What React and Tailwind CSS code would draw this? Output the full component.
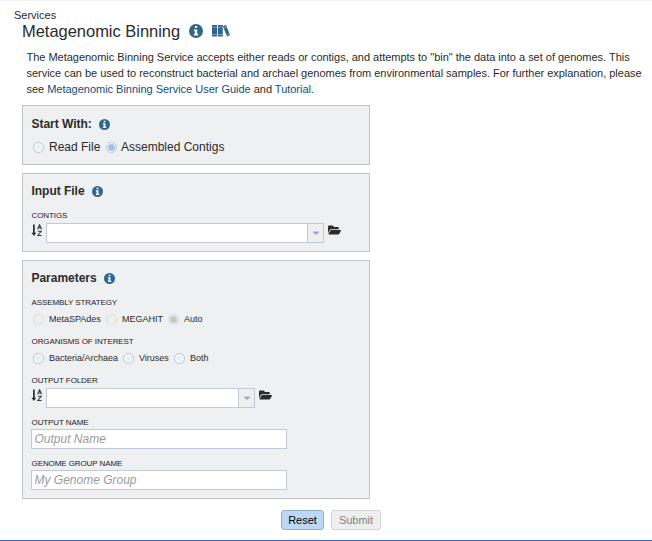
import React from "react";
import { FaFolderOpen } from "react-icons/fa";

function Info({ className }) {
  return (
    <svg className={"shrink-0 " + className} viewBox="0 0 14 14">
      <circle cx="7" cy="7" r="7" fill="#2f6690" />
      <path d="M5.9 2.1h2.3v2H5.9zM4.9 5.4h3.3v4.4h1v1.7H4.9V9.8h1V7.1h-1z" fill="#fff" />
    </svg>
  );
}

function Books() {
  return (
    <svg className="ml-[9px] h-[12px] w-[18px] shrink-0" viewBox="0 0 18 12">
      <path d="M0 0h5v11.4H0zM5.8 0h5v11.4h-5zM10.9 1.3 14 .1l4 10-3 1.3z" fill="#2f6690" />
      <path d="M0 2.2h5M5.8 2.2h5M0 9.5h5M5.8 9.5h5M11.5 3.2l3.2-1.3M14.3 9.9l3.2-1.3" stroke="#fff" strokeWidth=".5" opacity=".75" />
    </svg>
  );
}

function SortIcon() {
  return (
    <svg className="mr-[3px] mt-px h-[13px] w-[12px] shrink-0" viewBox="0 0 12 13">
      <path d="M2.9 .6v9" stroke="#2b2b2b" strokeWidth="1.7" />
      <path d="M.5 8.7h4.8L2.9 12z" fill="#2b2b2b" />
      <path d="M6.6 5.3 8.6.7l2 4.6M7.3 3.9h2.6M6.8 7.3h3.4L6.8 11.5h3.8" fill="none" stroke="#3a3a3a" strokeWidth="1.05" />
    </svg>
  );
}

function Radio({ disabled, checked }) {
  return (
    <span
      className={
        "flex size-[11px] shrink-0 items-center justify-center rounded-full border " +
        (disabled ? "border-[#d9dadb] bg-[#f0f0f1]" : "border-[#b9c2cf] bg-[radial-gradient(circle,#d8eaf8_0%,#edf5fc_45%,#fff_75%)]")
      }
    >
      {checked && <span className={"size-[7px] rounded-full " + (disabled ? "bg-[#c6c7c9]" : "bg-[#9cc5e8]")} />}
    </span>
  );
}

function Panel({ className, children }) {
  return <section className={"ml-[22px] w-[348px] border border-[#c1c4c6] bg-[#eff0f2] pl-[8px] " + className}>{children}</section>;
}

function Heading({ children }) {
  return (
    <h2 className="flex h-[16px] items-center text-[12px] font-bold leading-[16px] tracking-[-0.03px] text-[#2b2b2b]">
      <span className="mr-[7px] pl-[0.5px]">{children}</span>
      <Info className="size-[11px]" />
    </h2>
  );
}

function Label({ className, children }) {
  return <div className={"h-[10px] whitespace-nowrap pl-[0.5px] text-[8px] leading-[10px] tracking-[-0.09px] text-[#222] " + className}>{children}</div>;
}

function Picker({ width }) {
  return (
    <div className="flex items-start">
      <SortIcon />
      <div className={"flex h-[20px] border border-[#c3cad7] bg-white " + width}>
        <div className="flex-1" />
        <div className="flex w-[16px] items-center justify-center border-l border-[#c3cad7] bg-[#efefef]">
          <svg className="size-[6px]" viewBox="0 0 6 6">
            <path d="M0 1.6h6v.8L3 5 0 2.4z" fill="#98add4" />
          </svg>
        </div>
      </div>
      <FaFolderOpen preserveAspectRatio="none" className="ml-[4px] mt-[1px] h-[12px] w-[13px] text-[#2b2b2b]" />
    </div>
  );
}

const field = "block h-[20px] w-[256px] border border-[#c3cad7] bg-white pb-px pl-[2.5px] text-[12px] italic text-[#333] outline-none placeholder:text-[#9b9b9b]";

export default function App() {
  return (
    <main className="flex h-[541px] w-[652px] flex-col overflow-hidden border-b border-t border-b-[#3569c1] border-t-[#f3f3f3] bg-white font-['Liberation_Sans',Arial,sans-serif] text-[#2b2b2b]">
      <div className="ml-[14px] mt-[8px] h-[13px] text-[11px] leading-[13px]">Services</div>
      <h1 className="ml-[22px] flex h-[18px] items-center text-[16.5px] leading-[18px]">
        <span className="mr-[9px] w-[158px] whitespace-nowrap tracking-[-0.03px]">Metagenomic Binning</span>
        <Info className="size-[14px]" />
        <Books />
      </h1>
      <p className="ml-[26.5px] mt-[9px] h-[48px] whitespace-nowrap text-[11px] leading-[16px] tracking-[-0.02px]">
        The Metagenomic Binning Service accepts either reads or contigs, and attempts to "bin" the data into a set of genomes. This
        <br />
        service can be used to reconstruct bacterial and archael genomes from environmental samples. For further explanation, please
        <br />
        see <a className="text-[#144d7b]">Metagenomic Binning Service User Guide</a> and <a className="text-[#144d7b]">Tutorial</a>.
      </p>

      <Panel className="mt-[8px] h-[60px] pt-[10px]">
        <Heading>Start With:</Heading>
        <div className="mt-[7px] flex h-[16px] items-center pl-[2px] text-[12px]">
          <Radio />
          <span className="ml-[5px] mr-[5px] w-[52px] whitespace-nowrap">Read File</span>
          <Radio checked />
          <span className="ml-[4px] whitespace-nowrap">Assembled Contigs</span>
        </div>
      </Panel>

      <Panel className="mt-[8px] h-[79px] pt-[9px]">
        <Heading>Input File</Heading>
        <Label className="mb-[2px] mt-[12px]">CONTIGS</Label>
        <Picker width="w-[278px]" />
      </Panel>

      <Panel className="mt-[8px] h-[239px] pt-[9px]">
        <Heading>Parameters</Heading>
        <Label className="mt-[12px]">ASSEMBLY STRATEGY</Label>
        <div className="mt-[5px] flex h-[13px] items-center pl-[2px] text-[9px] leading-[13px]">
          <Radio disabled />
          <span className="ml-[5px] mr-[4px] w-[53px]">MetaSPAdes</span>
          <Radio disabled />
          <span className="ml-[5px] mr-[5px] w-[41px]">MEGAHIT</span>
          <Radio disabled checked />
          <span className="ml-[5px]">Auto</span>
        </div>
        <Label className="mt-[11px]">ORGANISMS OF INTEREST</Label>
        <div className="mt-[5px] flex h-[13px] items-center pl-[2px] text-[9px] leading-[13px]">
          <Radio />
          <span className="ml-[5px] mr-[5px] w-[69px]">Bacteria/Archaea</span>
          <Radio />
          <span className="ml-[5px] mr-[5px] w-[30px]">Viruses</span>
          <Radio />
          <span className="ml-[5px]">Both</span>
        </div>
        <Label className="mb-[2px] mt-[11px]">OUTPUT FOLDER</Label>
        <Picker width="w-[209px]" />
        <Label className="mb-[1px] mt-[10px]">OUTPUT NAME</Label>
        <input className={field} placeholder="Output Name" />
        <Label className="mb-[1px] mt-[10px]">GENOME GROUP NAME</Label>
        <input className={field} placeholder="My Genome Group" />
      </Panel>

      <div className="ml-[281px] mt-[11px] flex gap-[7px] text-[11px]">
        <button className="h-[20px] w-[43px] rounded-[3px] border border-[#8fb0cd] bg-[#bcd8f4] text-black">Reset</button>
        <button className="h-[20px] w-[50px] rounded-[3px] border border-[#d3d3d3] bg-[#efefef] text-[#818181]">Submit</button>
      </div>
    </main>
  );
}
